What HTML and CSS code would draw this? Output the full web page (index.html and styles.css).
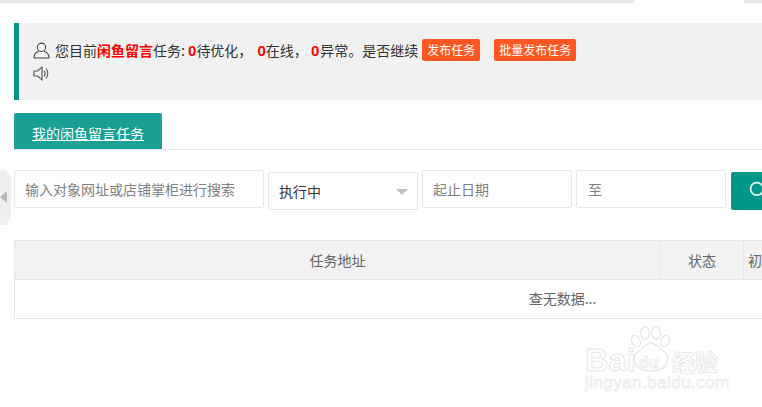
FILE: index.html
```html
<!DOCTYPE html>
<html lang="zh-CN">
<head>
<meta charset="utf-8">
<title>我的闲鱼留言任务</title>
<link rel="stylesheet" href="styles.css">
</head>
<body>
<div class="topbar"><span class="topbar-a"></span><span class="topbar-b"></span></div>
<main class="page">
  <section class="quote">
    <div class="quote-line">
      <svg class="icon-user" viewBox="0 0 18 18" width="17" height="17"><circle cx="9" cy="5.6" r="4.4"/><path d="M1 17c0-4.2 3-6.6 5.2-7.3M17 17c0-4.2-3-6.6-5.2-7.3M1 17h16"/></svg>
      <span class="q-text">您目前<b class="hot">闲鱼留言</b>任务: <b class="num">0</b>待优化， <b class="num second-num">0</b>在线， <b class="num third-num">0</b>异常。是否继续</span>
      <a class="btn-orange">发布任务</a>
      <a class="btn-orange second">批量发布任务</a>
    </div>
    <div class="quote-line2">
      <svg class="icon-sound" viewBox="0 0 17 15" width="17" height="15"><path d="M1 5h3.5L9 1.2v12.6L4.5 10H1z"/><path d="M11 4.5c1.2 1.6 1.2 4.4 0 6M13 2.5c2.400 2.800 2.400 7.200 0 10"/></svg>
    </div>
  </section>
  <nav class="tabs"><a class="tab">我的闲鱼留言任务</a></nav>
  <form class="filters">
    <div class="field search">输入对象网址或店铺掌柜进行搜索</div>
    <div class="field select">执行中<i class="caret"></i></div>
    <div class="field date">起止日期</div>
    <div class="field date">至</div>
    <div class="search-btn"><svg viewBox="0 0 16 16" width="18" height="18"><circle cx="7" cy="7" r="5.600"/><path d="M11 11l4 4"/></svg></div>
  </form>
  <div class="table">
    <div class="thead">
      <div class="th c-url">任务地址</div>
      <div class="th c-state">状态</div>
      <div class="th c-init">初始</div>
    </div>
    <div class="tbody">查无数据...</div>
  </div>
</main>
<div class="side-handle"><i></i></div>
<div class="watermark">
  <svg class="paw" viewBox="0 0 42 48" width="42" height="48">
    <ellipse cx="6" cy="15" rx="4" ry="6" transform="rotate(-25 6 15)"/>
    <ellipse cx="15" cy="7" rx="4.500" ry="6"/>
    <ellipse cx="26" cy="7" rx="4.500" ry="6"/>
    <ellipse cx="35" cy="15" rx="4" ry="6" transform="rotate(25 35 15)"/>
    <path d="M21 17c-5 0-6 4-11 7-5 3-7 8-5 13 2 5 8 8 16 8s14-3 16-8c2-5 0-10-5-13-5-3-6-7-11-7z"/>
  </svg>
  <div class="wm-row"><span class="wm-bai">Bai</span><span class="wm-du">du</span><span class="wm-cn">经验</span></div>
  <div class="wm-url">jingyan.baidu.com</div>
</div>
</body>
</html>
```
FILE: styles.css
```css
* { box-sizing: border-box; }
html, body { margin: 0; height: 407px; overflow: hidden; background: #fff; }
body { position: relative; font-family: "Noto Sans CJK SC", "Liberation Sans", sans-serif; font-size: 14px; color: #333; }

.topbar { display: flex; justify-content: space-between; height: 3px; }
.topbar-a { width: 634px; background: #ececec; border: solid #e0e0e0; border-width: 0 1px 1px 0; }
.topbar-b { width: 18px; background: #ececec; border: solid #e0e0e0; border-width: 0 0 1px 1px; }

.page { width: 1110px; padding: 20px 0 0 14px; }

.quote { height: 77px; background: #f1f1f1; border-left: 5px solid #009688; padding: 13px 0 0 14px; }
.quote-line { display: flex; align-items: center; height: 28px; white-space: nowrap; }
.icon-user { fill: none; stroke: #444; stroke-width: 1.1; margin-right: 5px; flex: none; }
.q-text { color: #333; }
.hot { color: #f00; font-weight: 700; }
.num { color: #f00; font-weight: 700; font-size: 15px; font-family: "Liberation Sans", sans-serif; }
.second-num { margin-left: 2px; }
.third-num { margin-right: 1px; }
.btn-orange { display: block; height: 22px; line-height: 21px; padding: 0 5px; margin-left: 4px; background: #ff5722; color: #fff; font-size: 12px; border-radius: 2px; }
.btn-orange.second { margin-left: 14px; }
.quote-line2 { height: 20px; padding-top: 2px; }
.icon-sound { display: block; fill: none; stroke: #555; stroke-width: 1.1; }

.tabs { margin-top: 13px; height: 37px; border-bottom: 1px solid #e6e6e6; }
.tab { display: block; width: 148px; height: 36px; line-height: 40px; background: #1aa094; color: #fff; text-align: center; text-decoration: underline; font-size: 14px; border-radius: 2px 2px 0 0; }

.filters { display: flex; align-items: flex-start; gap: 4px; margin-top: 20px; height: 40px; }
.field { flex: none; background: #fff; border: 1px solid #e6e6e6; border-radius: 2px; height: 38px; line-height: 36px; padding-left: 10px; font-size: 14px; color: #808080; white-space: nowrap; }
.search { width: 250px; }
.select { position: relative; width: 150px; margin-top: 2px; color: #333; }
.date { width: 150px; }
.date + .date { padding-left: 11px; }
.caret { position: absolute; right: 9px; top: 16px; width: 0; height: 0; border: solid transparent; border-width: 6px 6px 0; border-top-color: #c2c2c2; }
.search-btn { flex: none; width: 60px; height: 38px; margin: 2px 0 0 1px; background: #009688; border-radius: 2px; padding: 9px 0 0 18px; }
.search-btn svg { display: block; fill: none; stroke: #e4f4f2; stroke-width: 1.5; }

.table { margin-top: 30px; border: 1px solid #e6e6e6; border-right: 0; }
.thead { display: flex; height: 39px; background: #f2f2f2; border-bottom: 1px solid #e6e6e6; }
.th { line-height: 38px; text-align: center; color: #666; font-size: 14px; border-right: 1px solid #e6e6e6; flex: none; }
.c-url { width: 646px; }
.c-state { width: 83px; }
.c-init { width: 366px; border-right: 0; text-align: left; padding-left: 4px; }
.tbody { height: 38px; line-height: 37px; text-align: center; color: #666; font-size: 14px; white-space: nowrap; }

.side-handle { position: absolute; left: 0; top: 170px; width: 11px; height: 55px; background: #efefef; clip-path: polygon(0 0, 55% 0, 100% 14%, 100% 86%, 55% 100%, 0 100%); }
.side-handle i { position: absolute; left: 0; top: 21px; width: 0; height: 0; border: solid transparent; border-width: 6px 7px 6px 0; border-right-color: #b8b8b8; }

.watermark { position: absolute; left: 585px; top: 326px; width: 136px; height: 66px; pointer-events: none; }
.paw { position: absolute; left: 45px; top: 0; fill: #fff; stroke: #e8e8e8; stroke-width: 1.3; }
.wm-row { position: absolute; left: 0; top: 20px; white-space: nowrap; line-height: 28px; font-family: "Liberation Sans", sans-serif; font-weight: 700; }
.wm-bai { font-size: 32px; letter-spacing: .5px; color: #fff; -webkit-text-stroke: 1px #e8e8e8; }
.wm-du { position: absolute; left: 54px; top: 8px; font-size: 16px; line-height: 18px; color: #fff; -webkit-text-stroke: .7px #e4e4e4; }
.wm-cn { position: absolute; left: 87px; top: 2px; font-family: "Noto Sans CJK SC", sans-serif; font-size: 23px; line-height: 26px; color: #fff; -webkit-text-stroke: .7px #e4e4e4; }
.wm-url { position: absolute; left: 0; top: 48px; font-family: "Liberation Sans", sans-serif; font-size: 17px; line-height: 18px; letter-spacing: .45px; color: #fff; -webkit-text-stroke: .6px #e6e6e6; white-space: nowrap; }
```
